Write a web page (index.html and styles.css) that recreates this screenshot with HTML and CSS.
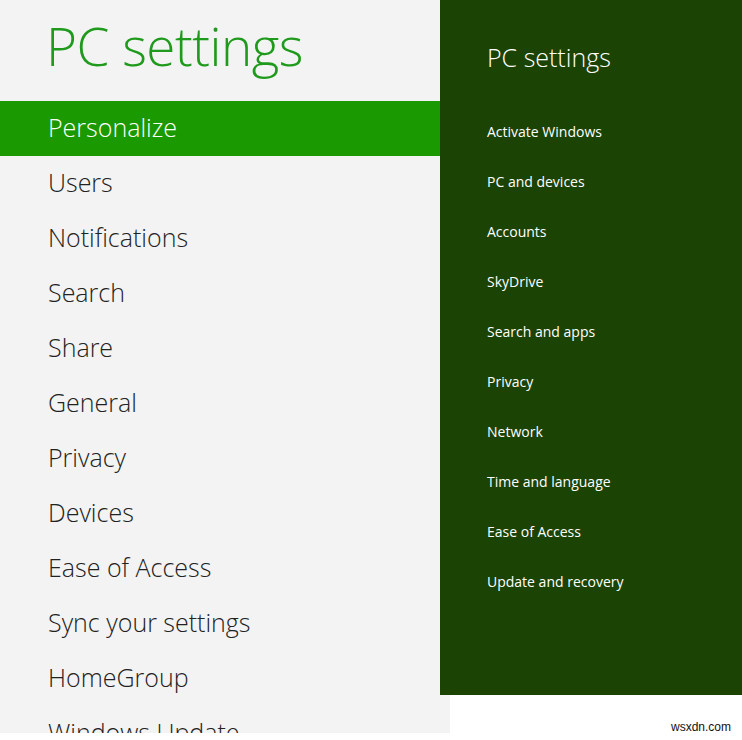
FILE: index.html
```html
<!DOCTYPE html>
<html>
<head>
<meta charset="utf-8">
<link rel="stylesheet" href="styles.css">
</head>
<body>
<div class="screen">
  <div class="left">
    <h1 class="title">PC settings</h1>
    <ul class="menu">
      <li class="item active">Personalize</li>
      <li class="item">Users</li>
      <li class="item">Notifications</li>
      <li class="item">Search</li>
      <li class="item">Share</li>
      <li class="item">General</li>
      <li class="item">Privacy</li>
      <li class="item">Devices</li>
      <li class="item">Ease of Access</li>
      <li class="item">Sync your settings</li>
      <li class="item">HomeGroup</li>
      <li class="item">Windows Update</li>
    </ul>
  </div>
  <div class="pane">
    <h2 class="pane-title">PC settings</h2>
    <ul class="pane-list">
      <li>Activate Windows</li>
      <li>PC and devices</li>
      <li>Accounts</li>
      <li>SkyDrive</li>
      <li>Search and apps</li>
      <li>Privacy</li>
      <li>Network</li>
      <li>Time and language</li>
      <li>Ease of Access</li>
      <li>Update and recovery</li>
    </ul>
  </div>
  <div class="watermark">wsxdn.com</div>
</div>
</body>
</html>
```
FILE: styles.css
```css
html, body {
  margin: 0;
  padding: 0;
  background: #ffffff;
}
.screen {
  position: relative;
  width: 742px;
  height: 740px;
  overflow: hidden;
  font-family: "Open Sans", "Liberation Sans", sans-serif;
}
.left {
  width: 450px;
  height: 733px;
  background: #f3f3f3;
  overflow: hidden;
}
.title {
  margin: 0;
  height: 101px;
  box-sizing: border-box;
  padding: 8px 0 0 46px;
  font-size: 53px;
  font-weight: 300;
  line-height: 76px;
  color: #1f9a1c;
  letter-spacing: -0.5px;
}
.menu {
  list-style: none;
  margin: 0;
  padding: 0;
}
.item {
  height: 55px;
  line-height: 52px;
  padding-left: 48px;
  font-size: 25px;
  font-weight: 300;
  color: #222222;
}
.item.active {
  background: #1a9a00;
  color: #ffffff;
}
.pane {
  position: absolute;
  left: 440px;
  top: 0;
  width: 302px;
  height: 695px;
  background: #1a4304;
  color: #ffffff;
  padding-left: 47px;
  box-sizing: border-box;
}
.pane-title {
  margin: 0;
  padding-top: 40px;
  font-size: 25px;
  font-weight: 300;
  line-height: 34px;
  height: 107px;
  box-sizing: border-box;
}
.pane-list {
  list-style: none;
  margin: 0;
  padding: 0;
}
.pane-list li {
  height: 50px;
  line-height: 50px;
  font-size: 14px;
  font-weight: 400;
}
.watermark {
  position: absolute;
  right: 11px;
  bottom: 6px;
  font-family: "Liberation Sans", Arial, sans-serif;
  font-size: 12px;
  color: #111111;
}
```
